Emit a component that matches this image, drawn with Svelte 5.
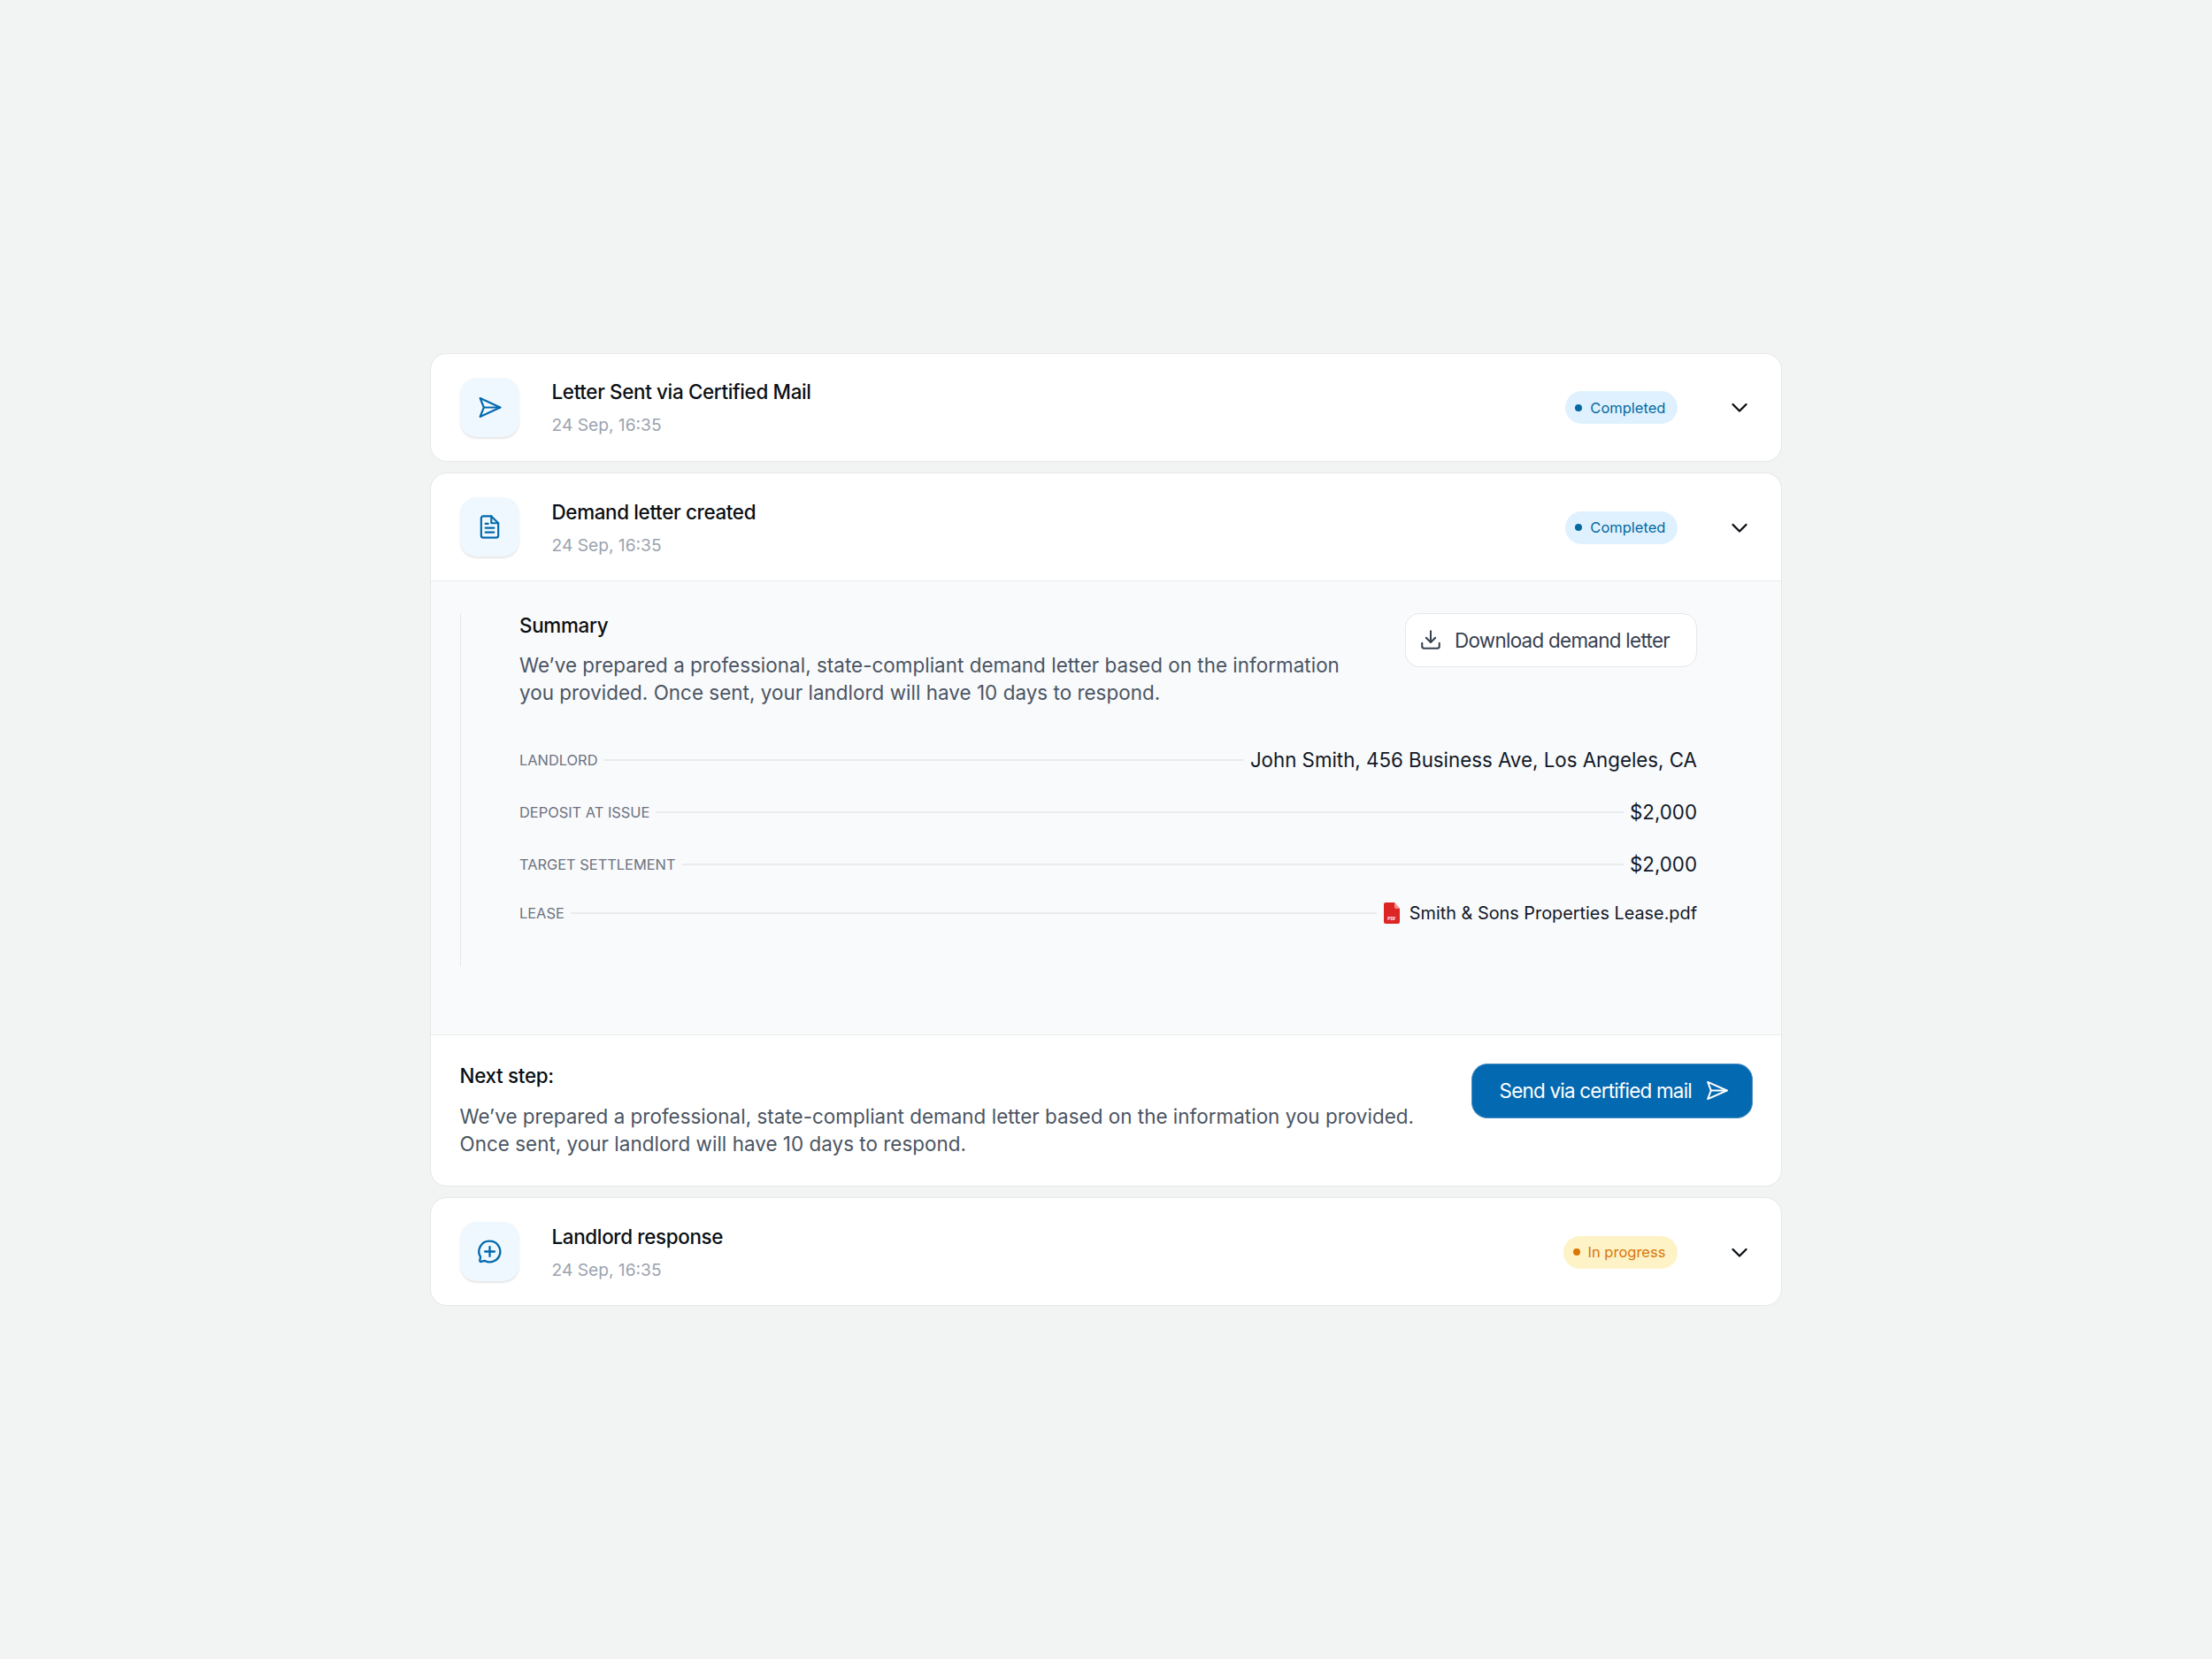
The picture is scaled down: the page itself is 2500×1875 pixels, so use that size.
<script>
  const completed = { label: 'Completed', tone: 'blue' };
  const progress = { label: 'In progress', tone: 'amber' };

  const details = [
    { label: 'Landlord', value: 'John Smith, 456 Business Ave, Los Angeles, CA' },
    { label: 'Deposit at issue', value: '$2,000' },
    { label: 'Target settlement', value: '$2,000' }
  ];

  const para = 'We’ve prepared a professional, state-compliant demand letter based on the information you provided. Once sent, your landlord will have 10 days to respond.';
</script>

{#snippet header(title, status, icon)}
  <div class="head">
    <div class="icon-box">
      {#if icon === 'send'}
        <svg width="29" height="29" viewBox="0 0 24 24" fill="none" stroke="currentColor" stroke-width="1.75" stroke-linejoin="round" stroke-linecap="round">
          <path d="M3 3.300 21.800 12 3 20.700 6.500 12Z" />
          <path d="M6.500 12H21.800" />
        </svg>
      {:else if icon === 'file'}
        <svg width="29" height="29" viewBox="0 0 24 24" fill="none" stroke="currentColor" stroke-width="1.8" stroke-linejoin="round" stroke-linecap="round">
          <path d="M13.500 2H6a2 2 0 0 0-2 2v16a2 2 0 0 0 2 2h12a2 2 0 0 0 2-2V8.500Z" />
          <path d="M13.500 2v6.500H20" />
          <path d="M8 9h2.500M8 13h8M8 17h8" />
        </svg>
      {:else}
        <svg width="29" height="29" viewBox="0 0 24 24" fill="none" stroke="currentColor" stroke-width="1.9" stroke-linejoin="round" stroke-linecap="round">
          <path d="M12 2.200a9.800 9.800 0 1 1-4.600 18.450l-3.500.85a1 1 0 0 1-1.200-1.200l.65-3.200A9.800 9.800 0 0 1 12 2.200Z" />
          <path d="M12 7.500v9M7.500 12h9" />
        </svg>
      {/if}
    </div>
    <div class="head-text">
      <div class="title">{title}</div>
      <div class="date">24 Sep, 16:35</div>
    </div>
    <span class="badge {status.tone}"><i class="dot"></i>{status.label}</span>
    <svg class="chevron" width="20" height="12" viewBox="0 0 20 12" fill="none" stroke="currentColor" stroke-width="2.300" stroke-linecap="round" stroke-linejoin="round">
      <path d="M2.500 2 10 9.500 17.500 2" />
    </svg>
  </div>
{/snippet}

<div class="page">
  <div class="list">
    <section class="card">
      {@render header('Letter Sent via Certified Mail', completed, 'send')}
    </section>

    <section class="card">
      {@render header('Demand letter created', completed, 'file')}

      <div class="body">
        <div class="rule-box">
          <div class="summary">
            <div class="summary-text">
              <h3>Summary</h3>
              <p>{para}</p>
            </div>
            <button class="download">
              <svg width="26" height="26" viewBox="0 0 24 24" fill="none" stroke="currentColor" stroke-width="1.9" stroke-linecap="round" stroke-linejoin="round">
                <path d="M12 3v11.500M7.200 10 12 14.800 16.800 10" />
                <path d="M3 15.500V19a2 2 0 0 0 2 2h14a2 2 0 0 0 2-2v-3.500" />
              </svg>
              Download demand letter
            </button>
          </div>

          <div class="rows">
            {#each details as d}
              <div class="row">
                <span class="label">{d.label}</span>
                <span class="line"></span>
                <span class="value">{d.value}</span>
              </div>
            {/each}
            <div class="row lease">
              <span class="label">Lease</span>
              <span class="line"></span>
              <svg class="pdf" width="18" height="24" viewBox="0 0 18 24">
                <path d="M2 0h10l6 7v15a2 2 0 0 1-2 2H2a2 2 0 0 1-2-2V2a2 2 0 0 1 2-2Z" fill="#dc2626" />
                <path d="M12 0l6 7h-4a2 2 0 0 1-2-2Z" fill="#f0938f" />
                <text x="9" y="19.500" text-anchor="middle" class="pdf-text">PDF</text>
              </svg>
              <span class="file-name">Smith &amp; Sons Properties Lease.pdf</span>
            </div>
          </div>
        </div>
      </div>

      <div class="foot">
        <div class="foot-text">
          <h3>Next step:</h3>
          <p>{para}</p>
        </div>
        <button class="send">
          Send via certified mail
          <svg width="27" height="27" viewBox="0 0 24 24" fill="none" stroke="currentColor" stroke-width="1.800" stroke-linejoin="round" stroke-linecap="round">
            <path d="M2.800 3.500 22 12 2.800 20.500 6 12Z" />
            <path d="M6 12H22" />
          </svg>
        </button>
      </div>
    </section>

    <section class="card">
      {@render header('Landlord response', progress, 'chat')}
    </section>
  </div>
</div>

<style>
  :global(body) {
    margin: 0;
    background: #f2f4f3;
  }
  .page {
    min-height: 1875px;
    display: flex;
    align-items: center;
    justify-content: center;
    font-family: Inter, "Liberation Sans", sans-serif;
    color: #0b0f14;
  }
  .list {
    width: 1528px;
    display: flex;
    flex-direction: column;
    gap: 12px;
  }
  .card {
    background: #fff;
    border: 1.600px solid #e5e7e9;
    border-radius: 19px;
    overflow: hidden;
  }
  .head {
    display: flex;
    align-items: center;
    height: 121.300px;
    padding: 0 36.600px 0 32.500px;
  }
  .icon-box {
    width: 67px;
    height: 67px;
    flex: none;
    border-radius: 19px;
    background: #eff8fe;
    box-shadow: 0 1.600px 2px rgba(16, 24, 40, 0.1);
    color: #0369ad;
    display: flex;
    align-items: center;
    justify-content: center;
  }
  .head-text {
    margin-left: 37px;
    margin-top: 2px;
    flex: 1;
  }
  .title {
    font-size: 22.400px;
    font-weight: 450;
    line-height: 32px;
    letter-spacing: -0.340px;
  }
  .date {
    font-size: 19.200px;
    line-height: 30px;
    margin-top: 6px;
    color: #9ca3af;
  }
  .badge {
    display: flex;
    align-items: center;
    height: 37px;
    margin-top: 1px;
    padding: 0 14px 0 11px;
    border-radius: 19px;
    font-size: 16.500px;
    font-weight: 400;
  }
  .dot {
    width: 8px;
    height: 8px;
    border-radius: 50%;
    margin-right: 9px;
    background: currentColor;
  }
  .blue { background: #dff1fe; color: #0369a1; }
  .amber { background: #fef3c7; color: #d97706; }
  .chevron {
    margin-left: 60px;
    margin-top: 2px;
    color: #0b0f14;
    flex: none;
  }
  .body {
    background: #f9fafc;
    border-top: 1.600px solid #e8eaec;
    border-bottom: 1.600px solid #e8eaec;
    padding: 35.600px 95px 76.400px 32.500px;
  }
  .rule-box {
    border-left: 1.600px solid #e5e7eb;
    padding-left: 66.500px;
    padding-bottom: 34.400px;
  }
  .summary {
    display: flex;
    justify-content: space-between;
    align-items: flex-start;
    gap: 64px;
    min-height: 106px;
  }
  .summary-text { flex: 1; }
  h3 {
    margin: 0;
    font-size: 22.400px;
    line-height: 28px;
    font-weight: 450;
    letter-spacing: -0.300px;
  }
  p {
    margin: 15px 0 0;
    font-size: 22.400px;
    line-height: 31px;
    font-weight: 400;
    letter-spacing: 0.040px;
    color: #4b5563;
  }
  .download {
    display: flex;
    align-items: center;
    gap: 14.400px;
    height: 61px;
    padding: 0 30px 0 15px;
    flex: none;
    background: #fff;
    border: 1.600px solid #e5e7eb;
    border-radius: 16px;
    font: 400 22.400px Inter, "Liberation Sans", sans-serif;
    letter-spacing: -0.700px;
    color: #374151;
  }
  .rows {
    margin-top: 30.600px;
    display: flex;
    flex-direction: column;
  }
  .row {
    display: flex;
    align-items: center;
    gap: 7px;
    height: 59px;
  }
  .row.lease { height: 51.400px; }
  .label {
    font-size: 16.400px;
    color: #6b7280;
    text-transform: uppercase;
  }
  .line {
    flex: 1;
    height: 1.600px;
    background: #e9ebef;
  }
  .value {
    font-size: 22.300px;
    color: #111827;
  }
  .pdf { flex: none; margin-left: 1px; }
  .pdf-text {
    font: 700 4.800px Inter, sans-serif;
    fill: #fff;
  }
  .file-name {
    font-size: 19.850px;
    color: #111827;
    margin-left: 4px;
  }
  .foot {
    display: flex;
    justify-content: space-between;
    align-items: flex-start;
    padding: 30.400px 32px 32px 32.500px;
  }
  .foot-text { width: 1100px; margin-top: 1.600px; }
  .foot-text p { margin-top: 16.600px; }
  .send {
    display: flex;
    align-items: center;
    gap: 15px;
    height: 62px;
    margin-top: 1.600px;
    padding: 0 26px 0 31px;
    flex: none;
    background: #0369b1;
    border: 1.600px solid #4a8fc4;
    border-radius: 18px;
    font: 400 22.400px Inter, "Liberation Sans", sans-serif;
    letter-spacing: -0.750px;
    color: #fff;
  }
</style>
